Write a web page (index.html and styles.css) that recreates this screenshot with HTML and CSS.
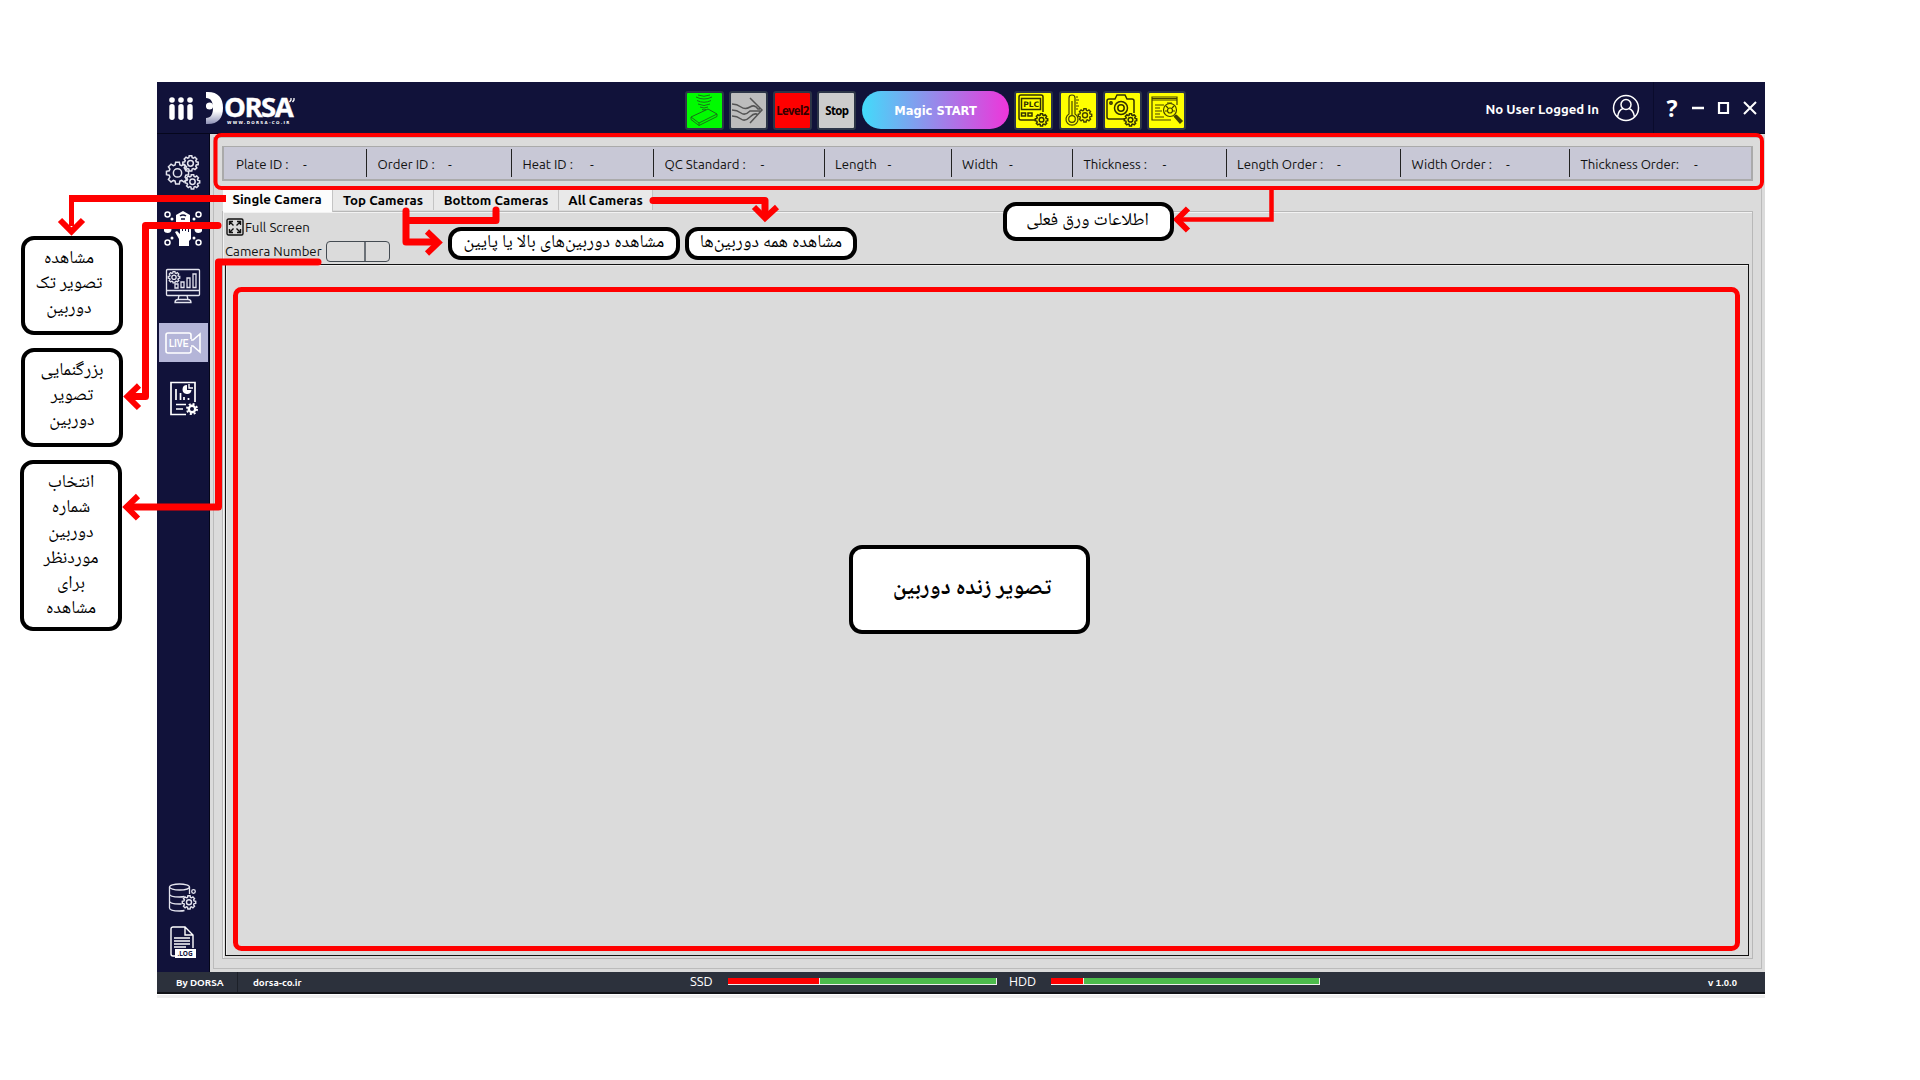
FILE: index.html
```html
<!DOCTYPE html>
<html lang="en">
<head>
<meta charset="utf-8">
<title>DORSA – Live</title>
<link rel="stylesheet" href="styles.css">
</head>
<body>
<svg class="defs" width="0" height="0">
  <defs>
    <linearGradient id="dfade" x1="0" y1="0" x2="0" y2="1"><stop offset=".6" stop-color="#fff"/><stop offset="1" stop-color="#8d90b5"/></linearGradient>
    <symbol id="gear" viewBox="0 0 20 20" overflow="visible"><path d="M8.4 1h3.2l.5 2.4 1.5.6 2-1.3 2.3 2.3-1.3 2 .6 1.5 2.4.5v2.9l-2.4.5-.6 1.6 1.3 2-2.3 2.2-2-1.3-1.5.6-.5 2.4H8.4l-.5-2.4-1.5-.6-2 1.3L2.100 16l1.300-2-.6-1.600L.4 11.900V9l2.400-.5.6-1.500L2.100 5l2.300-2.300 2 1.300 1.500-.6z"/><circle cx="10" cy="10.400" r="3.600"/></symbol>
  </defs>
</svg>

<div class="window">
  <header class="topbar">
    <svg class="menu" width="24" height="24" viewBox="0 0 24 24" fill="#fff"><circle cx="3" cy="3" r="2.800"/><circle cx="12" cy="3" r="2.800"/><circle cx="21" cy="3" r="2.800"/><rect x=".3" y="7" width="5.400" height="16" rx="2.700"/><rect x="9.300" y="7" width="5.400" height="16" rx="2.700"/><rect x="18.300" y="7" width="5.400" height="16" rx="2.700"/></svg>
    <div class="logo">
      <svg width="18" height="33" viewBox="0 0 18 33"><path d="M0 0h2c10 0 15 6 15 16S12 32 2 32H0v-6c5 0 7-4 7-10S5 6 0 6z" fill="url(#dfade)"/><circle cx="3.500" cy="14" r="3.600" fill="#fff"/></svg>
      <div class="logo-text"><b>ORSA</b><small>WWW.DORSA-CO.IR</small></div>
      <svg class="mark" width="6" height="5" viewBox="0 0 6 5" stroke="#fff" stroke-width="1.300"><path d="M2 0v2L.5 4M5 0v2L3.500 4" fill="none"/></svg>
    </div>
    <div class="tools">
      <span class="tool green"><svg width="36" height="36" viewBox="0 0 36 36" fill="none" stroke="#187018" stroke-width="1"><path d="M5 25l17-8 9 5-18 9zM5 25v2.500l8 6 18-9V22M13 31v2.500M10 5q8 4 16 0M11 8.500q7 3.500 14 0M12 12q6 3 12 0M14 15q4 2 8 0M16 17.500q2 1 4 0M12 3q6 2.500 12 0"/></svg></span>
      <span class="tool gray"><svg width="36" height="36" viewBox="0 0 36 36" fill="none" stroke="#555" stroke-width="1.500"><path d="M2 12q5 0 9 3t9 0 8 2h2M2 18q5 0 9 3t9-2h11M2 24q5 0 9 3t9-2 8-2M20 6l12 12-12 13"/></svg></span>
      <span class="tool red">Level2</span>
      <span class="tool stop">Stop</span>
      <span class="magic">Magic START</span>
      <span class="tool yellow"><svg width="36" height="36" viewBox="0 0 36 36" fill="none" stroke="#333200" stroke-width="1.500"><path d="M19 28H5a2 2 0 0 1-2-2V5a2 2 0 0 1 2-2h20a2 2 0 0 1 2 2v15M5.500 6.500h19v11h-19zM5.500 21h4v3h-4zM12 21h4v3h-4z"/><text x="7.300" y="14.700">PLC</text><use href="#gear" x="19" y="21" width="13" height="13" stroke-width="2.300"/></svg></span>
      <span class="tool yellow"><svg width="36" height="36" viewBox="0 0 36 36" fill="none" stroke="#444300" stroke-width="1.200"><path d="M9 22V6q0-3 3-3t3 3v16a6 6 0 1 1-6 0zM12 9v14M18 5h-2M19 8h-3M18 11h-2M19 14h-3M18 17h-2"/><circle cx="12" cy="27" r="3.300"/><use href="#gear" x="18" y="16" width="14" height="14" stroke-width="2"/></svg></span>
      <span class="tool yellow"><svg width="36" height="36" viewBox="0 0 36 36" fill="none" stroke="#333200" stroke-width="1.500"><path d="M20 27H5a2 2 0 0 1-2-2V9a2 2 0 0 1 2-2h6l2-4h8l2 4h5a2 2 0 0 1 2 2v12"/><circle cx="7" cy="11" r="1.200"/><circle cx="17" cy="16" r="6.500"/><circle cx="17" cy="16" r="3.200"/><use href="#gear" x="20" y="21" width="13" height="13" stroke-width="2.300"/></svg></span>
      <span class="tool yellow"><svg width="36" height="36" viewBox="0 0 36 36" fill="none" stroke="#444300" stroke-width="1.200"><path d="M22 28H3V5h25v8M3 6.500h25M3 8h25M6 13h9M6 16h5M6 19h7M6 22h5M6 25h9M18 11h5"/><circle cx="21" cy="18" r="6.500"/><path d="M26 23l6 7M25 24l6 7 2-2-6-6" stroke-width="1.500"/><circle cx="21" cy="18.500" r="2.500"/><path d="M17 14l2 2M25 14l-2 2M16 19h2M24 19h2"/></svg></span>
    </div>
    <div class="user"><span>No User Logged In</span>
      <svg width="28" height="28" viewBox="0 0 28 28" fill="none" stroke="#fff" stroke-width="1.500"><circle cx="14" cy="14" r="12.500"/><circle cx="14" cy="10.500" r="5"/><path d="M5.500 23q1-7 5.500-8.500M22.500 23q-1-7-5.500-8.500"/></svg>
    </div>
    <div class="controls">
      <span class="help">?</span>
      <svg width="65" height="14" viewBox="0 0 65 14" fill="none" stroke="#fff"><path d="M0 7h12" stroke-width="2.500"/><path d="M27 2h9v10h-9z" stroke-width="2.200"/><path d="M52 1l12 12M64 1L52 13" stroke-width="2"/></svg>
    </div>
  </header>

  <div class="middle">
    <nav class="sidebar">
      <span class="nav"><svg width="36" height="36" viewBox="0 0 36 36" fill="none" stroke="#e4e4ee" stroke-width="1.400"><use href="#gear" x="1" y="7" width="23" height="23" stroke-width="1.300"/><use href="#gear" x="17.500" y="1" width="16" height="16" stroke-width="1.900"/><use href="#gear" x="20" y="20" width="15" height="15" stroke-width="2"/></svg></span>
      <span class="nav"><svg width="38" height="36" viewBox="0 0 38 36" fill="none" stroke="#fff" stroke-width="1.500"><circle cx="3.500" cy="3.500" r="2.500"/><circle cx="34.500" cy="3.500" r="2.500"/><circle cx="3.500" cy="31.500" r="2.500"/><circle cx="34.500" cy="31.500" r="2.500"/><g fill="#fff" stroke="none"><circle cx="3.500" cy="18" r="4"/><circle cx="34.500" cy="18" r="4"/><circle cx="8" cy="8" r="1.500"/><circle cx="30" cy="8" r="1.500"/><circle cx="8" cy="27" r="1.500"/><circle cx="30" cy="27" r="1.500"/><path d="M12 4l7-4 7 4v8H12zM15 35v-7l-4-7 2-1 3 3V14h2v6h1v-7h2v7h1v-6h2v7h1v-4h2v11l-2 2v5z"/></g><path d="M16 5q3-2 6 0M17 8h4" stroke="#11123a"/></svg></span>
      <span class="nav"><svg width="36" height="36" viewBox="0 0 36 36" fill="none" stroke="#e4e4ee" stroke-width="1.300"><rect x="1.500" y="1.500" width="33" height="26" rx="1"/><path d="M1.500 22.500h33M14 27.500l-1 4h10l-1-4M10 34.500q0-3 3-3h10q3 0 3 3zM10 19v-3h3v4h-3zM16 19.500V14h3v5.500zM22 19.500V10h3v9.500zM28 19.500V6h3v13.500z"/><use href="#gear" x="3" y="3" width="12" height="12" stroke-width="2.200"/></svg></span>
      <span class="nav active"><svg width="36" height="24" viewBox="0 0 36 24" fill="none" stroke="#fff" stroke-width="1.600"><path d="M26 8V4a2 2 0 0 0-2-2H3a2 2 0 0 0-2 2v16a2 2 0 0 0 2 2h21a2 2 0 0 0 2-2v-4M26 9h2l7-6v18l-7-6h-2"/><text x="4" y="16" textLength="19.500" lengthAdjust="spacingAndGlyphs">LIVE</text></svg></span>
      <span class="nav report"><svg width="30" height="35" viewBox="0 0 30 35" fill="none" stroke="#fff" stroke-width="1.700"><path d="M26 21V1.500H2v32h15"/><path d="M7 8v11M11.500 12v7M15 16v3M19.500 17v2M7 23.500h10M7 28h7"/><path d="M18 4a4.500 4.500 0 1 0 4.500 5H18z" fill="#fff" stroke="none"/><path d="M20 3v4h4" stroke-width="1.400"/><circle cx="23" cy="28" r="3.200" stroke-width="2.400"/><circle cx="23" cy="28" r="5" stroke-width="2" stroke-dasharray="2 1.930"/></svg></span>
      <span class="nav small push"><svg width="30" height="30" viewBox="0 0 30 30" fill="none" stroke="#e4e4ee" stroke-width="1.300"><ellipse cx="11.500" cy="4" rx="10" ry="3"/><path d="M1.500 4v21q0 3 10 3 3 0 5-.5M21.500 4v7M1.500 11q0 3 10 3 3 0 5-.5M1.500 18q0 3 10 3h2"/><use href="#gear" x="14" y="12" width="14" height="14" stroke-width="2"/><circle cx="25.500" cy="8.500" r="1.800"/></svg></span>
      <span class="nav small"><svg width="28" height="32" viewBox="0 0 28 32" fill="none" stroke="#fff" stroke-width="1.400"><path d="M6 30H4a2 2 0 0 1-2-2V3a2 2 0 0 1 2-2h12l8 8v13M16 1v8h8M5 12h16M5 15h16M5 18h16M5 21h12"/><path d="M6 23h21v9H6z" fill="#fff" stroke="none"/><text x="8.500" y="29.700">.LOG</text></svg></span>
    </nav>
    <main class="content">
      <div class="info">
        <div class="cell c1"><span>Plate ID :</span><i>-</i></div>
        <div class="cell"><span>Order ID :</span><i>-</i></div>
        <div class="cell"><span>Heat ID :</span><i>-</i></div>
        <div class="cell"><span>QC Standard :</span><i>-</i></div>
        <div class="cell"><span>Length</span><i>-</i></div>
        <div class="cell"><span>Width</span><i>-</i></div>
        <div class="cell"><span>Thickness :</span><i>-</i></div>
        <div class="cell"><span>Length Order :</span><i>-</i></div>
        <div class="cell"><span>Width Order :</span><i>-</i></div>
        <div class="cell"><span>Thickness Order:</span><i>-</i></div>
      </div>
      <div class="tabs">
        <span class="tab t1 selected">Single Camera</span><span class="tab t2">Top Cameras</span><span class="tab t3">Bottom Cameras</span><span class="tab t4">All Cameras</span>
      </div>
      <section class="pane">
        <div class="row"><svg width="18" height="18" viewBox="0 0 18 18" fill="none" stroke="#111" stroke-width="1.400"><rect x="1" y="1" width="16" height="16" rx="1.500"/><path d="M3.500 7V3.500H7M4 4l3.500 3.500M11 3.500h3.500V7M14 4l-3.500 3.500M3.500 11v3.500H7M4 14l3.500-3.500M11 14.500h3.500V11M14 14l-3.500-3.500"/></svg><span>Full Screen</span></div>
        <div class="row number"><span>Camera Number</span><div class="spin"><i></i><i></i></div></div>
        <div class="view"></div>
      </section>
    </main>
  </div>

  <footer class="status">
    <b class="by">By DORSA</b><b class="site">dorsa-co.ir</b>
    <span class="disk">SSD</span><div class="bar"><i style="width:34.4%"></i></div>
    <span class="disk hdd">HDD</span><div class="bar"><i style="width:12.3%"></i></div>
    <b class="version">v 1.0.0</b>
  </footer>
</div>

<svg class="overlay" width="1920" height="1080" viewBox="0 0 1920 1080" fill="none" stroke="#f00">
  <rect x="215.500" y="135" width="1546.500" height="53" rx="6" stroke-width="4"/>
  <rect x="235.500" y="289.500" width="1502" height="659" rx="6" stroke-width="5"/>
  <path d="M226 198.500H69" stroke-width="7"/><path d="M71.500 196v30" stroke-width="5"/><path d="M60 220l11.500 11.500L83 220" stroke-width="6"/>
  <g stroke-width="7" stroke-linejoin="round" stroke-linecap="round">
    <path d="M218 225.500H145.500V396.500H130"/><path d="M318 262H218.500V507H128"/>
    <path d="M406 211v31h28M496 210v10.500h-90"/><path d="M653 200.500h112V214"/>
  </g>
  <path d="M1271.500 190v29.500H1178" stroke-width="4.500"/>
  <g stroke-width="6"><path d="M139 385.500l-11.500 11L139 408"/><path d="M138 496l-11.500 11L138 518.500"/><path d="M427 231.500l11.500 11L427 253.500"/><path d="M754 207l11 11 12-11"/><path d="M1188 208.500l-11 11 11 11"/></g>
</svg>
<div class="callout n1">مشاهده<br>تصویر تک<br>دوربین</div>
<div class="callout n2">بزرگنمایی<br>تصویر<br>دوربین</div>
<div class="callout n3">انتخاب<br>شماره<br>دوربین<br>موردنظر<br>برای<br>مشاهده</div>
<div class="callout n4">مشاهده دوربین‌های بالا یا پایین</div>
<div class="callout n5">مشاهده همه دوربین‌ها</div>
<div class="callout n6">اطلاعات ورق فعلی</div>
<div class="callout n7">تصویر زنده دوربین</div>
</body>
</html>
```
FILE: styles.css
```css
* { box-sizing: border-box; }
body { margin: 0; height: 1080px; overflow: hidden; background: #fff; color: #111; font-family: Ubuntu, "Noto Sans", sans-serif; padding: 82px 0 0 157px; position: relative; }
i { font-style: normal; }
svg { display: block; flex: none; }
.defs { position: absolute; }
.window { width: 1608px; height: 916px; display: flex; flex-direction: column; border-bottom: 3px solid #eee; }

.topbar { height: 52px; flex: none; display: flex; background: #11123a; border-bottom: 1px solid #05061c; color: #fff; }
.menu { margin: 15px 0 0 12px; }
.logo { display: flex; margin: 10px 0 0 13px; width: 90px; flex: none; }
.logo-text { display: flex; flex-direction: column; width: 66px; }
.logo-text b { font: bold 27.500px/30px "Open Sans", sans-serif; letter-spacing: -1.500px; height: 29px; white-space: nowrap; -webkit-text-stroke: .4px #fff; }
.logo-text small { font: bold 4px/4px "DejaVu Sans", sans-serif; letter-spacing: 1.300px; margin: 0 0 0 3px; white-space: nowrap; }
.mark { margin: 6px 0 0 -1px; }
.tools { display: flex; gap: 5.250px; margin: 9px 0 0 388.500px; flex: none; }
.tool { width: 39px; height: 38.500px; border: 2px solid #2c3547; border-radius: 3px; display: flex; align-items: center; justify-content: center; color: #000; font: bold 11.500px "Noto Sans", sans-serif; overflow: hidden; }
.green { background: #00fb00; }
.gray { background: #bdbdbd; }
.red { background: #f00; color: #300; letter-spacing: -.7px; }
.stop { background: #ccc; letter-spacing: -.7px; }
.yellow { background: #ff0; }
.yellow text { font: bold 7.500px "DejaVu Sans", sans-serif; fill: #333200; stroke: none; }
.magic { width: 147px; height: 38px; border-radius: 19px; background: linear-gradient(90deg, #42dbfa, #ee35da); display: flex; align-items: center; justify-content: center; font: bold 11.500px "DejaVu Sans", sans-serif; margin-left: .5px; padding-top: 1px; }
.user { margin: 0 13px 0 auto; display: flex; align-items: center; gap: 13px; font-weight: bold; font-size: 13.200px; white-space: nowrap; }
.user span { padding-top: 2px; }
.controls { width: 112px; border-left: 1px solid #0a0b2c; display: flex; align-items: center; }
.help { width: 36px; text-align: center; font: bold 23px/40px "Noto Sans", sans-serif; margin-right: 2px; }

.middle { flex: 1; display: flex; min-height: 0; }
.sidebar { width: 53px; background: #11123a; border-right: 1px solid #050618; padding: 9px 0 8px; display: flex; flex-direction: column; align-items: center; }
.nav { height: 57px; width: 49px; display: flex; align-items: center; justify-content: center; }
.nav.active { height: 39px; margin: 9px 0; background: #b4b5d8; }
.nav.report { padding: 0 0 2px 2px; }
.nav text { font: bold 10.500px "Liberation Sans", sans-serif; fill: #fff; stroke: none; }
.nav.small { height: 44px; }
.nav.small text { font: bold 6.500px "Noto Sans", sans-serif; fill: #11123a; }
.push { margin-top: auto; }
.content { flex: 1; background: #dbdbdb; border: 3px solid #dbdbdb; outline: 1px solid #bbb; outline-offset: -4px; border-right: 0; padding: 9px 12px 10px 9px; display: flex; flex-direction: column; min-width: 0; }

.info { height: 35px; flex: none; width: 1531px; display: grid; grid-template-columns: 143px 145px 142px 170.500px 127px 121.500px 153.500px 174.500px 169px 1fr; border: 2px solid #aaa; border-width: 1px 2px 2px; background: #c8c8d6; padding: 2px 0; }
.cell { display: flex; align-items: center; justify-content: space-between; padding: 1px 57px 0 10.500px; border-right: 1px solid #222; font-size: 13.200px; white-space: nowrap; }
.cell:last-child { border-right: 0; padding-right: 51px; }
.cell i { width: 6px; }
.cell.c1 { padding-left: 12px; }

.tabs { display: flex; height: 21px; margin-top: 9px; flex: none; margin-left: 1px; z-index: 1; }
.tab { height: 20px; background: #e9e9e9; border-right: 1px solid #c4c4c4; display: flex; align-items: center; justify-content: center; font-weight: bold; font-size: 13.300px; white-space: nowrap; color: #000; }
.tab.selected { background: #fcfcfc; height: 22px; padding: 0 1px 4px 0; }
.t1 { width: 110px; } .t2 { width: 101px; } .t3 { width: 125px; } .t4 { width: 94px; }
.pane { flex: 1; min-height: 0; border: 1px solid #b8b8b8; box-shadow: inset 1px 1px #f2f2f2; width: 1531px; padding: 6px 3px 2px 2px; display: flex; flex-direction: column; }
.row { display: flex; align-items: center; gap: 1px; height: 18px; font-size: 13.300px; padding-left: 1px; white-space: nowrap; flex: none; }
.number { height: 21px; margin-top: 5px; padding-left: 0; gap: 5px; font-size: 13.200px; }
.number span { width: 96px; margin-top: -1px; }
.spin { width: 64px; height: 21px; border: 1px solid #444b52; border-radius: 4px; display: flex; }
.spin i:first-child { width: 39px; border-right: 2px solid #6c7278; }
.view { flex: 1; margin-top: 2px; border: 1px solid #111; box-shadow: inset 1px 1px #eee; }

.status { height: 22px; flex: none; margin-bottom: 1px; background: #2c313c; border-bottom: 2px solid #111318; display: flex; align-items: center; color: #fff; white-space: nowrap; }
.by { width: 81px; height: 20px; line-height: 22px; padding-left: 19px; font-size: 9.800px; border-right: 1px solid #1c2028; }
.site { width: 452px; padding: 1px 0 0 15px; font-size: 9.800px; }
.disk { width: 38px; font-size: 12.900px; line-height: 14px; margin-bottom: 2px; }
.hdd { margin-left: 12px; width: 42px; }
.bar { width: 269px; height: 7px; background: #4cbb4c; border: 1px solid #eee; border-width: 0 1px 1px 0; margin-bottom: 1px; }
.bar i { display: block; height: 6px; background: #f00; border-right: 1px solid #eee; }
.version { margin: 1px 28px 0 auto; font: bold 9.500px "Liberation Sans", sans-serif; }

.overlay { position: absolute; left: 0; top: 0; z-index: 2; }
.callout { position: absolute; z-index: 3; background: #fff; border: 4px solid #000; border-radius: 13px; direction: rtl; text-align: center; color: #000; font: 18.200px/25.200px "Noto Naskh Arabic", "DejaVu Sans", serif; white-space: nowrap; display: flow-root; }
.n1 { left: 21px; top: 236px; width: 102px; height: 99px; padding: 7px 6px 0 0; }
.n2 { left: 21px; top: 348px; width: 102px; height: 99px; padding-top: 7px; }
.n3 { left: 20px; top: 460px; width: 102px; height: 171px; padding-top: 7px; }
.n4 { left: 448px; top: 227px; width: 232px; height: 33px; }
.n5 { left: 685px; top: 227px; width: 172px; height: 33px; }
.n6 { left: 1003px; top: 202px; width: 171px; height: 39px; padding: 3px 2px 0 0; }
.n7 { left: 849px; top: 545px; width: 241px; height: 89px; font-size: 22.800px; font-weight: bold; line-height: 80px; padding-left: 5px; }
```
